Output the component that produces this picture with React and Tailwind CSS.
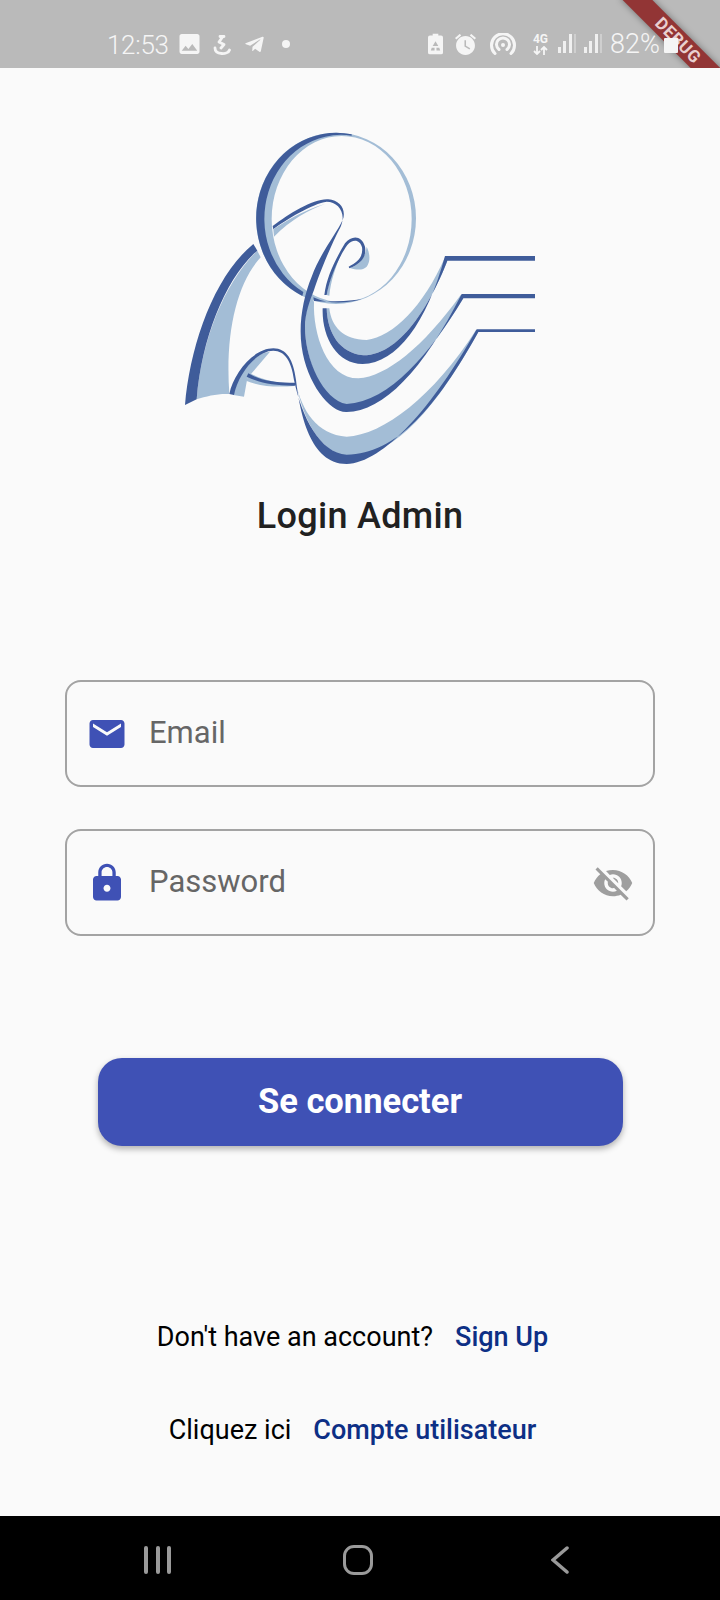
import React from 'react';
import { FaTelegramPlane } from 'react-icons/fa';

const DARK = '#3f5c9a';
const LIGHT = '#a3bdd6';

const Logo = () => (
    <svg viewBox="0 0 1140 1080" className="block h-[360px] w-[380px]">
        {/* left arch */}
        <path fill={LIGHT} d="M80 838C95 650 170 480 262 392L272 412C200 490 165 640 178 822C145 820 110 828 80 838Z" />
        <path fill={DARK} d="M45 855C60 680 130 470 250 372L262 392C170 470 95 650 80 838Z" />
        {/* ring */}
        <path fill={LIGHT} fillRule="evenodd" d="M258 295A240 257 0 1 1 738 295A240 257 0 1 1 258 295ZM305 297A210 249 0 1 0 725 297A210 249 0 1 0 305 297Z" />
        <path fill={DARK} d="M545 43A240 257 0 0 0 397 528L400 516A230 252 0 0 1 545 47Z" />
        <path fill={DARK} d="M430 532Q490 560 575 538Q490 548 432 543Z" />
        {/* small curl */}
        <path fill={LIGHT} d="M590 380C600 400 602 425 590 440C578 452 560 450 540 444C565 436 585 415 590 380ZM470 525C478 480 495 430 515 395C500 435 482 480 478 527Z" />
        <path fill={DARK} d="M538 445C575 430 590 410 585 380C575 345 545 345 525 370C495 420 470 470 463 525L470 525C480 470 510 405 532 375C550 355 570 360 576 382C580 408 565 426 536 440Z" />
        {/* first band */}
        <path fill={LIGHT} d="M478 565C484 620 520 660 590 660C670 650 760 560 825 412L832 422C790 530 700 705 580 706C510 700 472 640 470 565Z" />
        <path fill={DARK} d="M458 565C455 650 500 732 578 732C680 730 770 610 825 408L1095 408L1095 422L832 422C790 530 700 705 580 706C510 700 472 640 470 565Z" />
        {/* second band and the ribbon above it */}
        <path fill={LIGHT} d="M432 545C428 640 470 775 565 775C650 770 760 680 872 525L880 535C780 700 660 850 530 858C460 850 405 720 405 620C405 590 410 560 420 530Z" />
        <path fill={DARK} d="M308 318C360 280 430 235 475 238C510 240 530 270 518 300C500 340 450 400 425 470C400 530 385 610 395 680C410 790 480 878 530 876C640 875 760 750 875 522L1095 522L1095 535L880 535C780 700 660 845 530 852C460 840 405 720 405 620C405 580 420 540 432 510C445 470 480 380 512 320C530 280 505 245 470 245C430 250 345 300 310 328Z" />
        <path fill={LIGHT} d="M310 328C345 305 400 270 465 252C420 268 360 300 312 350Z" />
        {/* lower loop, crossbar and third band */}
        <path fill={LIGHT} d="M190 825C205 760 250 700 300 695L232 775L222 830Z" />
        <path fill={LIGHT} d="M228 782C270 800 320 802 372 798L370 790C320 790 280 780 240 760Z" />
        <path fill={DARK} d="M235 760C270 782 320 790 375 788L375 797C320 798 270 790 230 770Z" />
        <path fill={LIGHT} d="M378 790C395 870 440 945 530 950C640 945 790 830 918 630L925 636C800 860 680 1005 540 1012C450 1000 400 900 378 790Z" />
        <path fill={DARK} d="M178 822C190 760 250 685 310 685C350 685 370 720 378 780C390 880 420 1032 530 1032C640 1030 790 860 920 628L1095 628L1095 636L925 636C800 860 680 1003 530 1004C450 1000 395 890 372 780C365 725 345 692 310 692C260 692 205 760 192 825Z" />
    </svg>
);

const Signal = ({ className }) => (
    <div className={`flex h-[19px] w-[18px] items-end justify-between ${className}`}>
        <span className="h-[6px] w-[3px] bg-[#f0f0f0]" />
        <span className="h-[12px] w-[3px] bg-[#f0f0f0]" />
        <span className="h-[19px] w-[3px] bg-[#f0f0f0]" />
        <span className="h-[19px] w-[2px] bg-[#cfcfcf]" />
    </div>
);

const StatusRight = () => (
    <div className="relative z-10 ml-[138px] flex items-start text-[#f5f5f5]">
        <svg viewBox="0 0 16 22" className="mt-[-1px] h-[22px] w-[15px]" fill="currentColor">
            <path d="M5 0h6v2h3a2 2 0 0 1 2 2v16a2 2 0 0 1-2 2H2a2 2 0 0 1-2-2V4a2 2 0 0 1 2-2h3Z" />
            <path d="M8 8l-3 5h6ZM4 15l-1 3h4v-3ZM12 15l1 3H9v-3Z" fill="#bababa" />
        </svg>
        <svg viewBox="2 2 20 20" className="ml-[12px] h-[21px] w-[21px]" fill="currentColor">
            <path d="M22 5.720l-4.600-3.860-1.290 1.530 4.600 3.860L22 5.720zM7.880 3.390L6.600 1.860 2 5.710l1.290 1.530 4.590-3.850zM12 4c-4.970 0-9 4.030-9 9s4.030 9 9 9 9-4.030 9-9-4.030-9-9-9z" />
            <path d="M12.500 8H11v6l4.750 2.850.75-1.230-4-2.370V8z" fill="#bababa" />
        </svg>
        <svg viewBox="0 0 28 22" className="mt-[-1px] ml-[13px] h-[22px] w-[28px]" fill="none" stroke="currentColor" strokeWidth="3" strokeLinecap="round">
            <path d="M6 20.500A11.500 11.500 0 1 1 22 20.500M10 16.500A6.500 6.500 0 1 1 18 16.500" />
            <circle cx="14" cy="12" r="2" fill="currentColor" stroke="none" />
        </svg>
        <div className="ml-[16px] flex w-[15px] flex-col items-center">
            <span className="text-[12px] leading-[11px] font-bold">4G</span>
            <svg viewBox="0 0 15 9" className="mt-[1px] h-[9px] w-[15px]" fill="none" stroke="currentColor" strokeWidth="1.800">
                <path d="M4 0v8M1 5l3 3 3-3M11 9V1M8 4l3-3 3 3" />
            </svg>
        </div>
        <Signal className="ml-[10px]" />
        <Signal className="ml-[8px]" />
        <span className="ml-[8px] text-[27px] leading-[20px] font-light">82%</span>
        <span className="mt-[4px] ml-[4px] h-[15px] w-[14px] rounded-[1px] bg-[#f5f5f5]" />
    </div>
);

const DebugBanner = () => (
    <div className="absolute top-0 right-0 h-[68px] w-[110px] overflow-hidden">
        <div className="absolute top-[30px] right-[-28px] flex h-[21px] w-[140px] rotate-45 items-center justify-center bg-[#923535] shadow-[0_0_7px_rgba(0,0,0,0.4)]">
            <span className="text-[17px] leading-none font-bold tracking-[0.5px] text-[#e9cfcf]">DEBUG</span>
        </div>
    </div>
);

const StatusBar = () => (
    <div className="relative flex h-[68px] shrink-0 items-start bg-[#bababa] pt-[34px] pl-[107px] font-['Roboto',sans-serif]">
        <span className="mt-[1px] w-[63px] text-[26px] leading-[20px] font-light tracking-[-0.3px] text-[#f5f5f5]">12:53</span>
        <svg viewBox="3 3 18 18" className="ml-[9px] h-[20px] w-[21px] text-[#f5f5f5]" fill="currentColor">
            <path d="M21 19V5c0-1.100-.9-2-2-2H5c-1.100 0-2 .9-2 2v14c0 1.100.9 2 2 2h14c1.100 0 2-.9 2-2zM8.500 13.500l2.500 3.010L14.500 12l4.500 6H5l3.500-4.500z" />
        </svg>
        <svg viewBox="0 0 18 20" className="mt-[1px] ml-[13px] h-[20px] w-[18px] text-[#f5f5f5]" fill="none" stroke="currentColor" strokeWidth="2.800" strokeLinecap="round" strokeLinejoin="round">
            <path d="M7 1.500h4M9.500 2L6 7l5 2.500L8 13M2 13c0 7 13 7 14.500 2" />
        </svg>
        <FaTelegramPlane className="ml-[12px] h-[21px] w-[23px] text-[#f5f5f5]" />
        <span className="mt-[6px] ml-[16px] h-[8px] w-[8px] rounded-full bg-[#f5f5f5]" />
        <DebugBanner />
        <StatusRight />
    </div>
);

const Field = ({ icon, placeholder, type, trailing, className }) => (
    <div className={`flex h-[107px] items-center rounded-[16px] border-2 border-[#a3a3a3] ${className}`}>
        <div className="ml-[19px] flex h-[42px] w-[42px] shrink-0 items-center justify-center text-[#3f51b5]">{icon}</div>
        <input
            type={type}
            placeholder={placeholder}
            className="mt-[-1px] ml-[21px] min-w-0 flex-1 bg-transparent text-[31px] text-[#212121] outline-none placeholder:text-[#666666]"
        />
        {trailing}
    </div>
);

const App = () => (
    <div className="flex h-[1600px] w-[720px] flex-col overflow-hidden bg-[#fafafa] font-['Roboto',sans-serif]">
        <StatusBar />

        <main className="flex flex-1 flex-col items-center">
            <div className="mt-[52px]">
                <Logo />
            </div>
            <h1 className="mt-[14px] text-[36px] leading-[44px] font-medium tracking-[0.3px] text-[#212121]">Login Admin</h1>

            <form className="mt-[142px] flex w-[590px] flex-col" onSubmit={(e) => e.preventDefault()}>
                <Field
                    type="email"
                    placeholder="Email"
                    icon={
                        <svg viewBox="0 0 24 24" className="h-[42px] w-[42px]" fill="currentColor">
                            <path d="M20 4H4c-1.100 0-1.990.9-1.990 2L2 18c0 1.100.9 2 2 2h16c1.100 0 2-.9 2-2V6c0-1.100-.9-2-2-2zm0 4l-8 5-8-5V6l8 5 8-5v2z" />
                        </svg>
                    }
                />
                <Field
                    type="password"
                    placeholder="Password"
                    className="mt-[42px]"
                    icon={
                        <svg viewBox="0 0 24 24" className="h-[42px] w-[42px]" fill="currentColor">
                            <path d="M18 8h-1V6c0-2.760-2.240-5-5-5S7 3.240 7 6v2H6c-1.100 0-2 .9-2 2v10c0 1.100.9 2 2 2h12c1.100 0 2-.9 2-2V10c0-1.100-.9-2-2-2zm-6 9c-1.100 0-2-.9-2-2s.9-2 2-2 2 .9 2 2-.9 2-2 2zm3.100-9H8.900V6c0-1.710 1.390-3.100 3.100-3.100 1.710 0 3.100 1.390 3.100 3.100v2z" />
                        </svg>
                    }
                    trailing={
                        <svg viewBox="0 0 24 24" className="mr-[19px] h-[42px] w-[42px] shrink-0 text-[#9e9e9e]" fill="currentColor">
                            <path d="M12 7c2.760 0 5 2.240 5 5 0 .65-.13 1.260-.36 1.830l2.920 2.920c1.510-1.260 2.700-2.890 3.430-4.750-1.730-4.390-6-7.500-11-7.500-1.400 0-2.740.25-3.980.7l2.160 2.160C10.740 7.130 11.350 7 12 7zM2 4.270l2.280 2.280.46.46C3.080 8.300 1.780 10.020 1 12c1.730 4.390 6 7.500 11 7.500 1.550 0 3.030-.3 4.380-.84l.42.42L19.730 22 21 20.730 3.270 3 2 4.270zM7.530 9.800l1.550 1.550c-.05.21-.08.43-.08.65 0 1.660 1.340 3 3 3 .22 0 .44-.03.65-.08l1.550 1.550c-.67.33-1.410.53-2.200.53-2.760 0-5-2.240-5-5 0-.79.2-1.530.53-2.200zm4.310-.78l3.150 3.150.02-.16c0-1.660-1.340-3-3-3l-.17.01z" />
                        </svg>
                    }
                />
                <button
                    type="submit"
                    className="mx-auto mt-[122px] h-[88px] w-[525px] rounded-[24px] bg-[#3f51b5] text-[34.5px] font-bold text-white shadow-[0_3px_6px_rgba(0,0,0,0.3)]"
                >
                    Se connecter
                </button>
            </form>

            <p className="mt-[174px] mr-[15px] flex gap-[22px] text-[27px] leading-[34px] text-black">
                <span>Don't have an account?</span>
                <a href="#signup" className="font-medium text-[#0d2f85]">Sign Up</a>
            </p>
            <p className="mt-[59px] mr-[15px] flex gap-[22px] text-[27px] leading-[34px] text-black">
                <span>Cliquez ici</span>
                <a href="#user" className="font-medium text-[#0d2f85]">Compte utilisateur</a>
            </p>
        </main>

        <nav className="flex h-[84px] shrink-0 items-start bg-black pt-[30px] text-[#9a9a9a]">
            <div className="ml-[144px] flex h-[28px] w-[27px] justify-between">
                <span className="w-[4px] rounded-full bg-[#9a9a9a]" />
                <span className="w-[4px] rounded-full bg-[#9a9a9a]" />
                <span className="w-[4px] rounded-full bg-[#9a9a9a]" />
            </div>
            <div className="mt-[-1px] ml-[172px] h-[30px] w-[30px] rounded-[11px] border-[3.5px] border-[#9a9a9a]" />
            <svg viewBox="0 0 18 28" className="ml-[178px] h-[28px] w-[18px]" fill="none" stroke="currentColor" strokeWidth="3.500" strokeLinecap="round">
                <path d="M16 2L2 14l14 12" />
            </svg>
        </nav>
    </div>
);

export default App;
